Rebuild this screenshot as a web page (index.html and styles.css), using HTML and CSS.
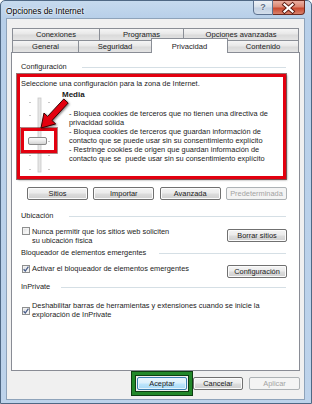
FILE: index.html
```html
<!DOCTYPE html>
<html lang="es">
<head>
<meta charset="utf-8">
<title>Opciones de Internet</title>
<link rel="stylesheet" href="styles.css">
</head>
<body>
<div class="window">
  <div class="titlebar">
    <span class="title">Opciones de Internet</span>
    <div class="caption">
      <div class="cap-help">?</div>
      <div class="cap-close">
        <svg width="31" height="14" viewBox="0 0 31 14">
          <path d="M11.5 3.5 L19.5 10.5 M19.5 3.5 L11.5 10.5" stroke="#5b1a10" stroke-width="4" stroke-linecap="square" fill="none"/>
          <path d="M11.5 3.5 L19.5 10.5 M19.5 3.5 L11.5 10.5" stroke="#ffffff" stroke-width="2.2" stroke-linecap="square" fill="none"/>
        </svg>
      </div>
    </div>
  </div>
  <div class="client">
    <div class="tabs">
      <div class="tabrow">
        <div class="tab t-conexiones">Conexiones</div>
        <div class="tab t-programas">Programas</div>
        <div class="tab t-avanzadas">Opciones avanzadas</div>
      </div>
      <div class="tabrow row2">
        <div class="tab t-general">General</div>
        <div class="tab t-seguridad">Seguridad</div>
        <div class="tab t-privacidad selected">Privacidad</div>
        <div class="tab t-contenido">Contenido</div>
      </div>
    </div>
    <div class="pane">
      <div class="group-head g-conf">Configuración</div>
      <div class="redbox">
        <div class="intro">Seleccione una configuración para la zona de Internet.</div>
        <div class="level">
          <svg class="slider" width="40" height="80" viewBox="0 0 40 80">
            <defs>
              <linearGradient id="thumbg" x1="0" y1="0" x2="0" y2="1">
                <stop offset="0" stop-color="#ffffff"/>
                <stop offset="0.5" stop-color="#eaeaea"/>
                <stop offset="1" stop-color="#cfcfcf"/>
              </linearGradient>
            </defs>
            <g fill="#c6c6c6">
              <rect x="9" y="6" width="2" height="1"/><rect x="28" y="6" width="2" height="1"/>
              <rect x="9" y="19" width="2" height="1"/><rect x="28" y="19" width="2" height="1"/>
              <rect x="9" y="32" width="2" height="1"/><rect x="28" y="32" width="2" height="1"/>
              <rect x="9" y="45" width="2" height="1"/><rect x="28" y="45" width="2" height="1"/>
              <rect x="9" y="59" width="2" height="1"/><rect x="28" y="59" width="2" height="1"/>
              <rect x="9" y="73" width="2" height="1"/><rect x="28" y="73" width="2" height="1"/>
            </g>
            <rect x="18" y="2" width="3" height="74" fill="#e6e6e6" stroke="#c9c9c9" stroke-width="0.8"/>
            <rect x="8.5" y="41.5" width="18" height="7" rx="1.5" fill="url(#thumbg)" stroke="#8a8a8a"/>
            <rect x="2.5" y="33.5" width="33" height="22" fill="none" stroke="#e3000f" stroke-width="3"/>
            <rect x="0.5" y="31.5" width="37" height="26" fill="none" stroke="#5a0000" stroke-width="0.8" opacity="0.6"/>
          </svg>
          <div class="desc">
            <div class="level-name">Media</div>
            <div class="bullets">- Bloquea cookies de terceros que no tienen una directiva de<br>privacidad sólida<br>- Bloquea cookies de terceros que guardan información de<br>contacto que se puede usar sin su consentimiento explícito<br>- Restringe cookies de origen que guardan información de<br>contacto que se&nbsp; puede usar sin su consentimiento explícito</div>
          </div>
        </div>
        <svg class="arrow" width="44" height="38" viewBox="0 0 44 38">
          <polygon points="34.8,3.96 18.6,21.4 14.97,18 12,33 26.7,28.9 23,25.5 39.2,8" fill="#e3000f" stroke="#3a0000" stroke-width="1" stroke-linejoin="round"/>
        </svg>
      </div>
      <div class="btnrow">
        <div class="btn w61">Sitios</div>
        <div class="btn w61">Importar</div>
        <div class="btn w61">Avanzada</div>
        <div class="btn w61 disabled">Predeterminada</div>
      </div>

      <div class="group-head g-ubic">Ubicación</div>
      <div class="check-row r-ubic">
        <div class="check-label">
          <span class="cb"></span>
          <span class="cb-text">Nunca permitir que los sitios web soliciten<br>su ubicación física</span>
        </div>
        <div class="btn w60 r-btn">Borrar sitios</div>
      </div>

      <div class="group-head g-bloq">Bloqueador de elementos emergentes</div>
      <div class="check-row r-bloq">
        <div class="check-label">
          <span class="cb checked"><svg width="6" height="6" viewBox="0 0 6 6"><path d="M0.6 3.2 L2.3 5 L5.4 0.6" stroke="#4a5f8c" stroke-width="1.3" fill="none"/></svg></span>
          <span class="cb-text">Activar el bloqueador de elementos emergentes</span>
        </div>
        <div class="btn w60 r-btn b-conf">Configuración</div>
      </div>

      <div class="group-head g-inpriv">InPrivate</div>
      <div class="check-row r-inpriv">
        <div class="check-label center">
          <span class="cb checked low"><svg width="6" height="6" viewBox="0 0 6 6"><path d="M0.6 3.2 L2.3 5 L5.4 0.6" stroke="#4a5f8c" stroke-width="1.3" fill="none"/></svg></span>
          <span class="cb-text">Deshabilitar barras de herramientas y extensiones cuando se inicie la<br>exploración de InPrivate</span>
        </div>
      </div>
    </div>
    <div class="footer">
      <div class="default-wrap"><div class="btn w50 default">Aceptar</div></div>
      <div class="btn w50 cancel">Cancelar</div>
      <div class="btn w51 disabled">Aplicar</div>
    </div>
  </div>
</div>
</body>
</html>
```

FILE: styles.css
```css
* { box-sizing: border-box; }
html, body { margin: 0; padding: 0; }
body {
  width: 312px;
  height: 404px;
  overflow: hidden;
  background: #ffffff;
  font-family: "Liberation Sans", Arial, sans-serif;
  font-size: 7.4px;
  color: #1b1b1b;
}
.window {
  width: 312px;
  height: 404px;
  border: 1px solid #4f6884;
  border-radius: 5px 5px 0 0;
  background: linear-gradient(180deg, #c6daee 0, #b7cfe9 18px, #bdd3eb 100%);
  display: flex;
  flex-direction: column;
}
.titlebar {
  height: 17px;
  display: flex;
  justify-content: space-between;
  align-items: flex-start;
  padding-left: 5px;
}
.title {
  font-size: 8.4px;
  line-height: 15px;
  padding-top: 3px;
  color: #000;
  text-shadow: 0 0 3px #ffffff, 0 0 2px #ffffff;
}
.caption {
  display: flex;
  margin-top: -1px;
  margin-right: 6px;
}
.cap-help {
  width: 20px;
  height: 15px;
  border: 1px solid #5d7290;
  border-radius: 0 0 0 4px;
  background: linear-gradient(180deg, #eef2f7 0, #d6dfea 48%, #c2d0e2 52%, #d3deeb 100%);
  color: #5b6b82;
  font-size: 9px;
  font-weight: bold;
  line-height: 13px;
  text-align: center;
  text-shadow: 0 0 2px #fff;
}
.cap-close {
  width: 32px;
  height: 15px;
  border: 1px solid #6d2a1f;
  border-left: none;
  border-radius: 0 0 4px 0;
  background: linear-gradient(180deg, #eab0a2 0, #dc8570 45%, #c8482e 55%, #d9826c 100%);
}
.cap-close svg { display: block; }

.client {
  flex: 1;
  margin: 0 6px 3px 5px;
  background: #f0f0f0;
  border: 1px solid #8ea3ba;
  padding: 9px 4px 0 4px;
  display: flex;
  flex-direction: column;
}
.tabs { margin-left: 1px; }
.tabrow {
  display: flex;
  align-items: flex-start;
  height: 12px;
}
.tab {
  height: 12px;
  border: 1px solid #8a8e96;
  border-bottom: none;
  background: linear-gradient(180deg, #f5f5f5 0, #e8e8e8 45%, #dadada 55%, #e4e4e4 100%);
  text-align: center;
  line-height: 11px;
  font-size: 7.6px;
  color: #1b1b1b;
}
.tab + .tab { margin-left: -1px; }
.row2 .tab { padding-top: 1px; line-height: 10px; }
.t-conexiones { width: 88px; }
.t-programas { width: 85px; }
.t-avanzadas { width: 116px; }
.t-general { width: 67px; }
.t-seguridad { width: 74px; }
.t-privacidad { width: 77px; }
.t-contenido { width: 72px; }
.row2 .tab.selected {
  height: 15px;
  margin-top: -2px;
  background: #ffffff;
  position: relative;
  z-index: 1;
  padding-top: 2px;
  line-height: 11px;
}

.pane {
  flex: 1;
  border: 1px solid #898c95;
  background: #ffffff;
  padding: 9px 13px 0 9px;
}
.group-head {
  display: flex;
  align-items: center;
  gap: 13px;
  height: 10px;
  line-height: 10px;
  white-space: nowrap;
}
.group-head::after {
  content: "";
  flex: 1;
  border-top: 1px solid #d5dfe5;
}
.g-conf { gap: 15px; }
.g-ubic { gap: 16px; }
.g-inpriv { gap: 11px; }
.redbox {
  position: relative;
  margin-top: 2px;
  margin-left: -4px;
  border: 3px solid #e3000f;
  padding: 2px 0 0 1px;
  box-shadow: 0 0 0 1px rgba(70, 0, 0, 0.55), 1px 1px 2px rgba(0, 0, 0, 0.45);
}
.intro { line-height: 9px; white-space: nowrap; }
.level { display: flex; align-items: flex-start; margin-top: 2px; }
.slider { display: block; margin-top: 6px; margin-left: -1px; flex: none; }
.desc { padding-left: 2px; white-space: nowrap; }
.level-name { font-weight: bold; font-size: 8px; line-height: 10px; }
.bullets { margin-top: 8.5px; padding-left: 7px; line-height: 9px; }
.arrow {
  position: absolute;
  left: 9px;
  top: 18px;
  filter: drop-shadow(1px 1px 1px rgba(0, 0, 0, 0.5));
}

.btn {
  height: 13px;
  border: 1px solid #707070;
  border-radius: 2px;
  background: linear-gradient(180deg, #f4f4f4 0, #ebebeb 48%, #dddddd 52%, #cfcfcf 100%);
  box-shadow: inset 0 0 0 1px #fbfbfb;
  text-align: center;
  line-height: 11px;
  white-space: nowrap;
  color: #1b1b1b;
}
.btn.disabled {
  color: #a3a3a3;
  border-color: #adb2b5;
  background: #f4f4f4;
  box-shadow: none;
}
.w61 { width: 61px; }
.w60 { width: 60px; }
.w50 { width: 50px; }
.w51 { width: 51px; }
.btnrow {
  display: flex;
  justify-content: space-between;
  width: 260px;
  margin: 8px 0 0 6px;
}
.g-ubic { margin-top: 11px; }
.g-bloq { margin-top: 3.5px; }
.g-inpriv { margin-top: 4px; }
.check-row {
  display: flex;
  justify-content: space-between;
  align-items: center;
}
.r-ubic { margin-top: 5.5px; }
.r-bloq { margin-top: 5.5px; align-items: flex-start; }
.r-bloq .b-conf { margin-top: 1.5px; }
.r-inpriv { margin-top: 8.5px; }
.r-btn { margin-right: -1px; }
.check-label {
  display: flex;
  align-items: flex-start;
  gap: 2px;
  margin-left: 1px;
  line-height: 9px;
  white-space: nowrap;
}
.check-label.center { align-items: center; }
.cb {
  flex: none;
  width: 8px;
  height: 8px;
  margin-top: 0.5px;
  border: 1px solid #8e8f8f;
  background: linear-gradient(135deg, #d9d9d9 0, #f4f4f4 60%, #ffffff 100%);
  box-shadow: inset 0 0 0 1px #f2f2f2;
  display: flex;
  align-items: center;
  justify-content: center;
}
.r-bloq .cb { margin-top: 1.5px; }
.cb.low { margin-top: 2px; }
.cb svg { display: block; }

.footer {
  display: flex;
  justify-content: flex-end;
  align-items: center;
  padding: 1px 0 4px;
}
.default-wrap {
  border: 3px solid #22882a;
  padding: 2px;
  margin-right: 1px;
  box-shadow: 0 0 0 1px #0e3d12, inset 0 0 0 1px #0e3d12;
}
.btn.default {
  border-color: #3c7fb1;
  background: linear-gradient(180deg, #eaf6fd 0, #d9f0fc 48%, #bee6fd 52%, #a7d9f5 100%);
  box-shadow: inset 0 0 0 1px #e6f4fc;
}
.cancel { margin-right: 6px; }
```
